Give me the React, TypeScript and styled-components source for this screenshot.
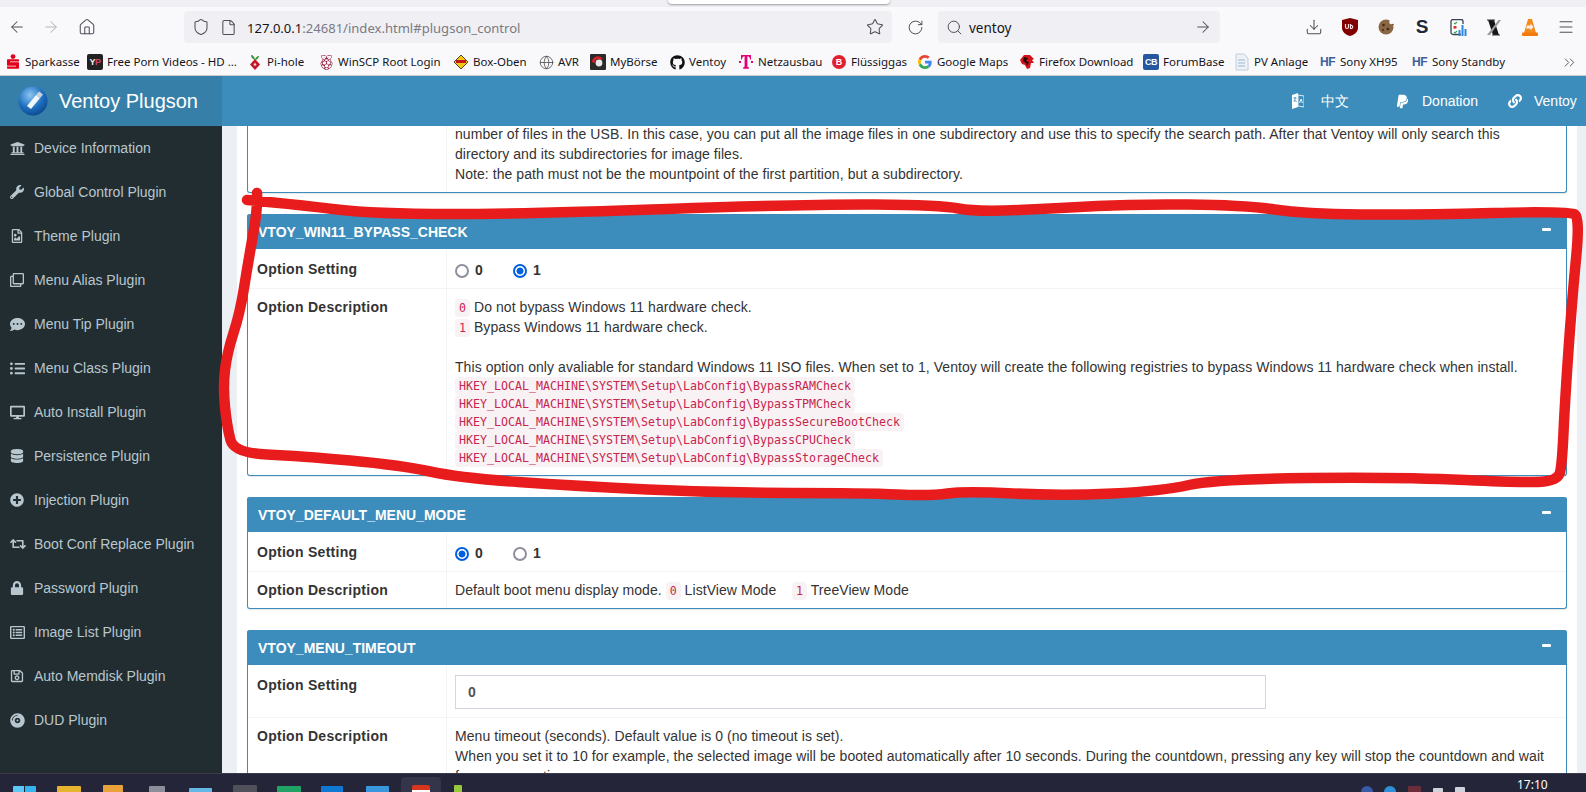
import React from 'react';
import styled, { createGlobalStyle } from 'styled-components';
import { ArrowLeft, ArrowRight, Home, Shield, File, Star, RotateCw, Search, Download, Menu, Globe, ChevronsRight } from 'lucide-react';
import {
  FaUniversity, FaWrench, FaRegFileImage, FaRegClone, FaCommentDots, FaListUl, FaDesktop, FaDatabase,
  FaPlusCircle, FaRetweet, FaLock, FaRegListAlt, FaRegSave, FaCompactDisc, FaPaypal, FaLink,
  FaGithub, FaRaspberryPi,
} from 'react-icons/fa';

const Global = createGlobalStyle`
  html, body { margin: 0; padding: 0; overflow: hidden; background: #fff; }
  * { box-sizing: border-box; }
`;

const Page = styled.div`
  position: relative;
  width: 1586px;
  height: 792px;
  display: flex;
  flex-direction: column;
  overflow: hidden;
  font-family: "Liberation Sans", Arial, sans-serif;
  font-size: 14px;
  line-height: 20px;
  color: #333;
`;

/* ---------- browser chrome ---------- */
const TopStrip = styled.div`
  position: relative;
  height: 7px;
  flex: none;
  background: #f0f0f4;
`;
const Popup = styled.div`
  position: absolute;
  left: 668px;
  top: -4px;
  width: 222px;
  height: 8px;
  background: #fff;
  border-radius: 4px;
  box-shadow: 0 1px 2px rgba(0, 0, 0, .35);
`;
const Toolbar = styled.div`
  height: 40px;
  flex: none;
  display: flex;
  align-items: center;
  background: #f9f9fb;
  color: #5b5b66;
`;
const ToolSlot = styled.div<{ $w: number; $ml?: number; $off?: boolean }>`
  width: ${p => p.$w}px;
  margin-left: ${p => p.$ml ?? 0}px;
  display: flex;
  align-items: center;
  justify-content: center;
  flex: none;
  color: ${p => (p.$off ? '#b5b5bb' : '#4f4f59')};
`;
const UrlBar = styled.div<{ $w: number; $ml?: number }>`
  width: ${p => p.$w}px;
  margin-left: ${p => p.$ml ?? 0}px;
  height: 32px;
  flex: none;
  display: flex;
  align-items: center;
  padding: 0 8px;
  background: #f0f0f4;
  border-radius: 4px;
  font-family: "Noto Sans", sans-serif;
  font-size: 13.5px;
  color: #15141a;
`;
const UrlHost = styled.span`
  margin: 1px 0 0 10px;
  font-size: 13.05px;
  white-space: nowrap;
`;
const UrlRest = styled.span`
  color: #7a7a83;
`;
const SearchText = styled.span`
  margin: 1px 0 0 6px;
`;
const PushRight = styled.div`
  margin-left: auto;
  display: flex;
  align-items: center;
`;
const UrlIcons = styled.div`
  display: flex;
  align-items: center;
  gap: 10px;
`;
const BookmarkBar = styled.div`
  height: 29px;
  flex: none;
  display: flex;
  align-items: center;
  padding: 2px 0 0 5px;
  background: #f9f9fb;
  border-bottom: 1px solid #c9cbd0;
  font-family: "Noto Sans", sans-serif;
  font-size: 11.5px;
  color: #15141a;
  white-space: nowrap;
`;
const Bookmark = styled.div<{ $w: number }>`
  width: ${p => p.$w}px;
  flex: none;
  display: flex;
  align-items: center;
  gap: 4px;
  overflow: hidden;
`;
const Fav = styled.span`
  width: 16px;
  height: 16px;
  flex: none;
  display: flex;
  align-items: center;
  justify-content: center;
`;
const BoxFav = styled.span<{ $bg: string; $fg: string }>`
  width: 16px;
  height: 16px;
  flex: none;
  display: flex;
  align-items: center;
  justify-content: center;
  background: ${p => p.$bg};
  color: ${p => p.$fg};
  border-radius: 2px;
  font-size: 9px;
  font-weight: 700;
  font-family: "Liberation Sans", sans-serif;
  letter-spacing: -.5px;
`;
const PinkLetter = styled.span`
  color: #d0456e;
`;
const HfFav = styled.span`
  width: 16px;
  flex: none;
  color: #3f5f9f;
  font-size: 12px;
  font-weight: 700;
  font-family: "Liberation Sans", sans-serif;
  letter-spacing: -.5px;
`;
const MoreSlot = styled.div`
  margin-left: auto;
  padding-right: 8px;
  display: flex;
  color: #5b5b66;
`;

/* ---------- app header ---------- */
const Header = styled.header`
  height: 50px;
  flex: none;
  display: flex;
  align-items: center;
  background: #3c8dbc;
  color: #fff;
`;
const Brand = styled.div`
  width: 222px;
  height: 100%;
  flex: none;
  display: flex;
  align-items: center;
  gap: 11px;
  padding-left: 18px;
  background: #367fa9;
  font-size: 20px;
`;
const HeaderLinks = styled.nav`
  margin-left: auto;
  display: flex;
  align-items: center;
`;
const HeaderLink = styled.a<{ $w: number; $gap: number }>`
  width: ${p => p.$w}px;
  display: flex;
  align-items: center;
  gap: ${p => p.$gap}px;
  color: #fff;
  white-space: nowrap;
`;

/* ---------- body ---------- */
const Body = styled.div`
  flex: 1;
  min-height: 0;
  display: flex;
  overflow: hidden;
`;
const Sidebar = styled.aside`
  width: 222px;
  flex: none;
  background: #222d32;
  color: #b8c7ce;
`;
const NavItem = styled.div`
  height: 44px;
  display: flex;
  align-items: center;
  padding-left: 10px;
`;
const NavIcon = styled.span`
  width: 24px;
  flex: none;
  display: flex;
  align-items: center;
`;
const Content = styled.main`
  flex: 1;
  min-width: 0;
  background: #ecf0f5;
  padding: 0 9px 0 15px;
`;
const Panel = styled.div`
  height: 100%;
  background: #fff;
  padding: 0 10px;
  display: flex;
  flex-direction: column;
  gap: 21px;
  overflow: hidden;
`;
const Box = styled.section`
  flex: none;
  border: 1px solid #3c8dbc;
  border-top: 0;
  border-radius: 3px;
  background: #fff;
  box-shadow: 0 1px 1px rgba(0, 0, 0, .1);
`;
const ClippedBox = styled(Box)`
  height: 67px;
  display: flex;
  flex-direction: column;
  justify-content: flex-end;
  overflow: hidden;
  border-radius: 0 0 3px 3px;
`;
const BoxHeader = styled.div`
  height: 35px;
  margin: 0 -1px 2px;
  display: flex;
  align-items: center;
  justify-content: space-between;
  padding: 0 16px 0 11px;
  background: #3c8dbc;
  color: #fff;
  font-weight: 700;
  border-radius: 3px 3px 0 0;
`;
const Collapse = styled.span`
  width: 9px;
  height: 3px;
  margin-top: -5px;
  background: #fff;
  border-radius: 1px;
`;
const Row = styled.div`
  display: flex;
  & + & { border-top: 1px solid #f4f4f4; }
`;
const LabelCell = styled.div`
  width: 199px;
  flex: none;
  padding: 8px 9px;
  border-right: 1px solid #f4f4f4;
  font-weight: 700;
  letter-spacing: .28px;
`;
const ValueCell = styled.div`
  flex: 1;
  min-width: 0;
  padding: 8px;
  white-space: nowrap;
  letter-spacing: .065px;
`;
const Code = styled.code`
  padding: 2px 4px;
  font-family: "DejaVu Sans Mono", monospace;
  font-size: 11.63px;
  line-height: 14px;
  letter-spacing: 0;
  color: #c7254e;
  background: #f9f2f4;
  border-radius: 4px;
`;
const CodeBlock = styled(Code)`
  display: block;
  width: fit-content;
  height: 18px;
  padding: 0 4px;
  line-height: 19px;
`;
const Radios = styled.div`
  display: flex;
  align-items: center;
  height: 21px;
`;
const RadioItem = styled.label`
  width: 58px;
  display: flex;
  align-items: center;
  font-weight: 700;
`;
const RadioMark = styled.span<{ $on?: boolean }>`
  width: 14px;
  height: 14px;
  margin-top: 3px;
  margin-right: 6px;
  border-radius: 50%;
  border: 2px solid ${p => (p.$on ? '#0060df' : '#8f8f9d')};
  background: ${p => (p.$on ? 'radial-gradient(circle, #0060df 0 3.2px, #fff 3.8px)' : '#fff')};
`;
const NumberInput = styled.div`
  width: 811px;
  height: 34px;
  display: flex;
  align-items: center;
  padding: 0 12px;
  border: 1px solid #d2d6de;
  font-weight: 700;
  color: #555;
`;

/* ---------- task bar ---------- */
const Taskbar = styled.footer`
  height: 19px;
  flex: none;
  display: flex;
  background: #25253a;
  border-top: 1px solid #3a3a4c;
  overflow: hidden;
  padding-left: 13px;
`;
const Task = styled.div<{ $w: number; $ml: number; $top: number; $c: string; $r?: number }>`
  width: ${p => p.$w}px;
  height: 16px;
  margin-left: ${p => p.$ml}px;
  margin-top: ${p => p.$top}px;
  flex: none;
  background: ${p => p.$c};
  border-radius: ${p => p.$r ?? 1}px;
`;
const ActiveTask = styled.div`
  width: 40px;
  height: 20px;
  margin: 3px 0 0 12px;
  flex: none;
  display: flex;
  justify-content: center;
  padding-top: 8px;
  background: #34344a;
  border-radius: 4px;
`;
const ActiveGlyph = styled.span`
  width: 18px;
  height: 14px;
  background: linear-gradient(#d8351f 0 5px, #fff 5px);
  border-radius: 2px;
`;
const Clock = styled.div`
  margin-left: 52px;
  margin-top: 3px;
  flex: none;
  color: #fff;
  font-family: "Noto Sans", sans-serif;
  font-size: 12px;
  line-height: 16px;
`;

/* ---------- annotation ---------- */
const Scribble = styled.svg`
  position: absolute;
  left: 0;
  top: 0;
  pointer-events: none;
`;

const scribblePoints: [number, number][] = [
  [257, 193], [258, 207], [248, 263], [240, 313], [227, 353], [223, 387], [227, 427], [234, 453],
  [300, 456], [400, 465], [460, 478], [576, 486], [720, 493], [865, 493], [930, 496], [965, 491],
  [1062, 496], [1163, 491], [1215, 479], [1400, 477], [1530, 483], [1558, 480], [1562, 465],
  [1565, 400], [1572, 300], [1580, 218], [1570, 211], [1416, 215], [1305, 214], [1244, 205], [1133, 204],
  [1062, 208], [976, 212], [941, 205], [809, 204], [526, 214], [374, 214], [300, 205], [247, 200],
];
const smoothPath = (pts: [number, number][]) => {
  let d = `M${pts[0][0]} ${pts[0][1]}`;
  for (let i = 1; i < pts.length - 1; i++) {
    const mx = (pts[i][0] + pts[i + 1][0]) / 2;
    const my = (pts[i][1] + pts[i + 1][1]) / 2;
    d += ` Q${pts[i][0]} ${pts[i][1]} ${mx} ${my}`;
  }
  const last = pts[pts.length - 1];
  return `${d} L${last[0]} ${last[1]}`;
};

/* ---------- small logos ---------- */
const Sparkasse = () => (
  <svg width="16" height="16" viewBox="0 0 16 16">
    <circle cx="8" cy="2.600" r="2.400" fill="#e2001a" />
    <path d="M2 6.200c0-.6.400-1 1-1h10c.6 0 1 .4 1 1v1.300H5v.7h8c.6 0 1 .4 1 1v4.600c0 .6-.4 1-1 1H3c-.6 0-1-.4-1-1v-1.300h9v-.7H3c-.6 0-1-.4-1-1z" fill="#e2001a" />
  </svg>
);
const PiHole = () => (
  <svg width="14" height="16" viewBox="0 0 14 16">
    <path d="M7 6C4 5 3 3 3 1c2 0 4 2 4 5zM7 6c0-2 2-4 4-4 0 2-2 4-4 4z" fill="#3d9a37" />
    <path d="M7 5l5 5.500-5 5.500-5-5.500z" fill="#c4162a" />
    <circle cx="7" cy="10.500" r="1.300" fill="#f3d7d7" />
  </svg>
);
const BoxOben = () => (
  <svg width="16" height="16" viewBox="0 0 16 16">
    <path d="M8 1l7 7-7 7-7-7z" fill="#f3c614" stroke="#222" strokeWidth=".8" />
    <rect x="3" y="6" width="10" height="3" fill="#c4161c" />
  </svg>
);
const MyBoerse = () => (
  <svg width="16" height="16" viewBox="0 0 16 16">
    <rect width="16" height="16" rx="1" fill="#2a2a2a" />
    <path d="M2 8a6 6 0 0 1 11-3l-3 1a3 3 0 0 0-5 3z" fill="#d2232a" />
    <circle cx="9" cy="9" r="3.400" fill="#e8e8e8" />
  </svg>
);
const Telekom = () => (
  <svg width="14" height="16" viewBox="0 0 14 16">
    <path d="M2 1h10v4.500h-1c0-2-.8-3.200-2.600-3.300V12c0 1 .4 1.400 1.500 1.400v1.400H4.100v-1.400c1.100 0 1.500-.4 1.500-1.400V2.200C3.800 2.300 3 3.500 3 5.500H2z" fill="#e20074" />
    <rect x="0" y="7" width="2" height="2" fill="#e20074" />
    <rect x="12" y="7" width="2" height="2" fill="#e20074" />
  </svg>
);
const BallB = styled.span`
  width: 14px;
  height: 14px;
  border-radius: 50%;
  background: #e0202c;
  color: #fff;
  font-size: 9px;
  font-weight: 700;
  line-height: 14px;
  text-align: center;
  font-family: "Liberation Sans", sans-serif;
`;
const GoogleG = () => (
  <svg width="14" height="14" viewBox="0 0 48 48">
    <path fill="#EA4335" d="M24 9.500c3.500 0 6.700 1.300 9.100 3.500l6.800-6.800C35.800 2.400 30.200 0 24 0 14.600 0 6.500 5.400 2.600 13.200l7.900 6.200C12.400 13.700 17.700 9.500 24 9.500z" />
    <path fill="#4285F4" d="M46.900 24.500c0-1.600-.2-3.100-.4-4.500H24v9h12.900c-.6 3-2.300 5.500-4.800 7.200l7.700 6c4.500-4.200 7.100-10.300 7.100-17.700z" />
    <path fill="#FBBC05" d="M10.500 28.600c-.5-1.400-.8-3-.8-4.600s.3-3.200.8-4.600l-7.900-6.200C.9 16.500 0 20.100 0 24s.9 7.500 2.600 10.800z" />
    <path fill="#34A853" d="M24 48c6.500 0 11.900-2.100 15.900-5.800l-7.700-6c-2.200 1.500-4.900 2.300-8.200 2.300-6.300 0-11.600-4.200-13.500-9.900l-7.900 6.200C6.500 42.600 14.600 48 24 48z" />
  </svg>
);
const RedDragon = () => (
  <svg width="16" height="16" viewBox="0 0 16 16">
    <path d="M1 6l4-5 6 0 4 4-2 1 2 3-3 0-1 5-3 1-2-4-3-1z" fill="#d3131a" />
    <path d="M5 3l4 1-2 3 3 1-2 4-1-3-3-2z" fill="#2a0a0a" />
  </svg>
);
const PvDoc = () => (
  <svg width="16" height="18" viewBox="0 0 16 18">
    <path d="M2 1h8l4 4v12H2z" fill="#eef2f6" stroke="#c3ccd6" />
    <path d="M4 7h7M4 10h7M4 13h7" stroke="#9db8d4" />
  </svg>
);
const Language = () => (
  <svg width="12" height="16" viewBox="0 0 12 16">
    <path d="M0 2l6-2v14l-6 2z" fill="#fff" />
    <path d="M6 2l6 1v11l-6-1z" fill="#3c8dbc" stroke="#dcebf5" />
    <path d="M1.500 5h3M3 4v1c0 2-1 3.500-1.500 4M3 7l1.500 2" stroke="#3c8dbc" strokeWidth=".9" fill="none" />
    <path d="M7.500 10l1.500-4 1.500 4" stroke="#fff" strokeWidth=".9" fill="none" />
  </svg>
);
const UBlock = () => (
  <svg width="16" height="18" viewBox="0 0 16 18">
    <path d="M8 0l8 2v8c0 4-4 7-8 8-4-1-8-4-8-8V2z" fill="#800000" />
    <path d="M3.500 6v3c0 2 3 2 3 0V6M8.500 6v5M8.500 7.500c3-1 3 3.500 0 3" fill="none" stroke="#f0dcdc" strokeWidth="1.200" />
  </svg>
);
const Cookie = () => (
  <svg width="16" height="18" viewBox="0 0 16 18">
    <circle cx="8" cy="9" r="7.500" fill="#8a6642" />
    <circle cx="5.500" cy="7" r="1.300" fill="#3f2a18" />
    <circle cx="10" cy="11" r="1.300" fill="#3f2a18" />
    <circle cx="5" cy="12" r="1" fill="#3f2a18" />
    <circle cx="13.500" cy="4" r="2.300" fill="#f9f9fb" />
    <circle cx="15" cy="6.500" r=".8" fill="#6b4c2e" />
  </svg>
);
const SMark = styled.span`
  width: 16px;
  height: 16px;
  display: flex;
  align-items: center;
  justify-content: center;
  border-radius: 50%;
  background: #fff;
  font-family: "Liberation Sans", sans-serif;
  font-size: 19px;
  font-weight: 700;
  color: #23273a;
`;
const ChartExt = () => (
  <svg width="17" height="17" viewBox="0 0 17 17">
    <path d="M11 15.500H3a2 2 0 0 1-2-2v-11a2 2 0 0 1 2-2h8a2 2 0 0 1 2 2V5" fill="#fff" stroke="#39424d" strokeWidth="1.300" />
    <path d="M4 4l1 1 2-2" fill="none" stroke="#3aa655" strokeWidth="1.100" />
    <rect x="3.500" y="7" width="3" height="2.600" fill="#d8342c" />
    <path d="M4 13l1 1 2-2" fill="none" stroke="#3aa655" strokeWidth="1.100" />
    <path d="M9.500 17v-6M12.500 17V6M15.500 17v-7" stroke="#2c86e0" strokeWidth="2" />
  </svg>
);
const XExt = () => (
  <svg width="16" height="17" viewBox="0 0 16 17">
    <path d="M2 1h6l5 15H7z" fill="#161616" />
    <path d="M15 1h-2.500L1 16h3z" fill="#9a9a9a" />
    <path d="M1 1h8M6 16h8" stroke="#333" />
  </svg>
);
const Vlc = () => (
  <svg width="16" height="17" viewBox="0 0 16 17">
    <path d="M6 0h4l4 14H2z" fill="#f28a1c" />
    <path d="M5 6.500h3.500v-2l3 3.500-3 3.500v-2H4z" fill="#f6efe6" />
    <rect x="0" y="13.500" width="16" height="3.500" rx="1" fill="#f27a0c" />
  </svg>
);
const LogoBall = () => (
  <svg width="30" height="30" viewBox="0 0 30 30">
    <defs>
      <radialGradient id="ball" cx=".4" cy=".3" r=".8">
        <stop offset="0" stopColor="#8cc6f2" />
        <stop offset=".55" stopColor="#1d6fc0" />
        <stop offset="1" stopColor="#0b3f82" />
      </radialGradient>
    </defs>
    <circle cx="15" cy="15" r="14.500" fill="url(#ball)" />
    <path d="M9 20l9-11 4 3-9 11z" fill="#f2f6fa" />
    <path d="M18 9l3-3.500 4 3-3 3.500z" fill="#c8d3de" />
  </svg>
);

/* ---------- data ---------- */
const navItems: [React.ComponentType<{ size?: number }>, string, number][] = [
  [FaUniversity, 'Device Information', 15],
  [FaWrench, 'Global Control Plugin', 14],
  [FaRegFileImage, 'Theme Plugin', 14],
  [FaRegClone, 'Menu Alias Plugin', 14],
  [FaCommentDots, 'Menu Tip Plugin', 15],
  [FaListUl, 'Menu Class Plugin', 15],
  [FaDesktop, 'Auto Install Plugin', 15],
  [FaDatabase, 'Persistence Plugin', 14],
  [FaPlusCircle, 'Injection Plugin', 14],
  [FaRetweet, 'Boot Conf Replace Plugin', 16],
  [FaLock, 'Password Plugin', 14],
  [FaRegListAlt, 'Image List Plugin', 15],
  [FaRegSave, 'Auto Memdisk Plugin', 14],
  [FaCompactDisc, 'DUD Plugin', 15],
];

const regs = ['BypassRAMCheck', 'BypassTPMCheck', 'BypassSecureBootCheck', 'BypassCPUCheck', 'BypassStorageCheck'];

const OptionRadios = ({ on }: { on: 0 | 1 }) => (
  <Radios>
    <RadioItem><RadioMark $on={on === 0} />0</RadioItem>
    <RadioItem><RadioMark $on={on === 1} />1</RadioItem>
  </Radios>
);

export default function App() {
  return (
    <Page>
      <Global />
      <TopStrip><Popup /></TopStrip>
      <Toolbar>
        <ToolSlot $w={33}><ArrowLeft size={18} strokeWidth={1.4} /></ToolSlot>
        <ToolSlot $w={36} $off><ArrowRight size={18} strokeWidth={1.4} /></ToolSlot>
        <ToolSlot $w={36}><Home size={18} strokeWidth={1.4} /></ToolSlot>
        <UrlBar $w={708} $ml={79}>
          <UrlIcons>
            <Shield size={18} strokeWidth={1.4} color="#4f4f59" />
            <File size={17} strokeWidth={1.5} color="#4f4f59" />
          </UrlIcons>
          <UrlHost>127.0.0.1<UrlRest>:24681/index.html#plugson_control</UrlRest></UrlHost>
          <PushRight><Star size={18} strokeWidth={1.4} color="#4f4f59" /></PushRight>
        </UrlBar>
        <ToolSlot $w={46}><RotateCw size={17} strokeWidth={1.4} /></ToolSlot>
        <UrlBar $w={282}>
          <Search size={17} strokeWidth={1.4} color="#4f4f59" />
          <SearchText>ventoy</SearchText>
          <PushRight><ArrowRight size={18} strokeWidth={1.4} color="#4f4f59" /></PushRight>
        </UrlBar>
        <ToolSlot $w={36} $ml={76}><Download size={18} strokeWidth={1.4} /></ToolSlot>
        <ToolSlot $w={36}><UBlock /></ToolSlot>
        <ToolSlot $w={36}><Cookie /></ToolSlot>
        <ToolSlot $w={36}><SMark>S</SMark></ToolSlot>
        <ToolSlot $w={36}><ChartExt /></ToolSlot>
        <ToolSlot $w={36}><XExt /></ToolSlot>
        <ToolSlot $w={36}><Vlc /></ToolSlot>
        <ToolSlot $w={36}><Menu size={18} strokeWidth={1.4} /></ToolSlot>
      </Toolbar>
      <BookmarkBar>
        <Bookmark $w={82}><Fav><Sparkasse /></Fav>Sparkasse</Bookmark>
        <Bookmark $w={160}><BoxFav $bg="#222" $fg="#f2f2f2">Y<PinkLetter>P</PinkLetter></BoxFav>Free Porn Videos - HD ...</Bookmark>
        <Bookmark $w={71}><Fav><PiHole /></Fav>Pi-hole</Bookmark>
        <Bookmark $w={135}><Fav><FaRaspberryPi size={15} color="#8f1738" /></Fav>WinSCP Root Login</Bookmark>
        <Bookmark $w={85}><Fav><BoxOben /></Fav>Box-Oben</Bookmark>
        <Bookmark $w={52}><Fav><Globe size={15} strokeWidth={1.2} color="#444" /></Fav>AVR</Bookmark>
        <Bookmark $w={79}><Fav><MyBoerse /></Fav>MyBörse</Bookmark>
        <Bookmark $w={69}><Fav><FaGithub size={15} color="#111" /></Fav>Ventoy</Bookmark>
        <Bookmark $w={93}><Fav><Telekom /></Fav>Netzausbau</Bookmark>
        <Bookmark $w={86}><Fav><BallB>B</BallB></Fav>Flüssiggas</Bookmark>
        <Bookmark $w={102}><Fav><GoogleG /></Fav>Google Maps</Bookmark>
        <Bookmark $w={124}><Fav><RedDragon /></Fav>Firefox Download</Bookmark>
        <Bookmark $w={91}><BoxFav $bg="#25599f" $fg="#fff">CB</BoxFav>ForumBase</Bookmark>
        <Bookmark $w={86}><Fav><PvDoc /></Fav>PV Anlage</Bookmark>
        <Bookmark $w={92}><HfFav>HF</HfFav>Sony XH95</Bookmark>
        <Bookmark $w={120}><HfFav>HF</HfFav>Sony Standby</Bookmark>
        <MoreSlot><ChevronsRight size={17} strokeWidth={1.4} /></MoreSlot>
      </BookmarkBar>

      <Header>
        <Brand><LogoBall />Ventoy Plugson</Brand>
        <HeaderLinks>
          <HeaderLink $w={103} $gap={17}><Language />中文</HeaderLink>
          <HeaderLink $w={113} $gap={12}><FaPaypal size={15} />Donation</HeaderLink>
          <HeaderLink $w={78} $gap={12}><FaLink size={14} />Ventoy</HeaderLink>
        </HeaderLinks>
      </Header>

      <Body>
        <Sidebar>
          {navItems.map(([Icon, label, size]) => (
            <NavItem key={label}><NavIcon><Icon size={size} /></NavIcon>{label}</NavItem>
          ))}
        </Sidebar>
        <Content>
          <Panel>
            <ClippedBox>
              <Row>
                <LabelCell />
                <ValueCell>
                  number of files in the USB. In this case, you can put all the image files in one subdirectory and use this to specify the search path. After that Ventoy will only search this<br />
                  directory and its subdirectories for image files.<br />
                  Note: the path must not be the mountpoint of the first partition, but a subdirectory.
                </ValueCell>
              </Row>
            </ClippedBox>

            <Box>
              <BoxHeader>VTOY_WIN11_BYPASS_CHECK<Collapse /></BoxHeader>
              <Row><LabelCell>Option Setting</LabelCell><ValueCell><OptionRadios on={1} /></ValueCell></Row>
              <Row>
                <LabelCell>Option Description</LabelCell>
                <ValueCell>
                  <Code>0</Code> Do not bypass Windows 11 hardware check.<br />
                  <Code>1</Code> Bypass Windows 11 hardware check.<br />
                  <br />
                  This option only avaliable for standard Windows 11 ISO files. When set to 1, Ventoy will create the following registries to bypass Windows 11 hardware check when install.
                  {regs.map(r => (
                    <CodeBlock key={r}>{`HKEY_LOCAL_MACHINE\\SYSTEM\\Setup\\LabConfig\\${r}`}</CodeBlock>
                  ))}
                </ValueCell>
              </Row>
            </Box>

            <Box>
              <BoxHeader>VTOY_DEFAULT_MENU_MODE<Collapse /></BoxHeader>
              <Row><LabelCell>Option Setting</LabelCell><ValueCell><OptionRadios on={0} /></ValueCell></Row>
              <Row>
                <LabelCell>Option Description</LabelCell>
                <ValueCell>
                  Default boot menu display mode. <Code>0</Code> ListView Mode &nbsp;&nbsp;&nbsp;<Code>1</Code> TreeView Mode
                </ValueCell>
              </Row>
            </Box>

            <Box>
              <BoxHeader>VTOY_MENU_TIMEOUT<Collapse /></BoxHeader>
              <Row><LabelCell>Option Setting</LabelCell><ValueCell><NumberInput>0</NumberInput></ValueCell></Row>
              <Row>
                <LabelCell>Option Description</LabelCell>
                <ValueCell>
                  Menu timeout (seconds). Default value is 0 (no timeout is set).<br />
                  When you set it to 10 for example, the selected image will be booted automatically after 10 seconds. During the countdown, pressing any key will stop the countdown and wait<br />
                  for your operation.
                </ValueCell>
              </Row>
            </Box>
          </Panel>
        </Content>
      </Body>

      <Taskbar>
        <Task $w={23} $ml={0} $top={12} $c="linear-gradient(90deg, #5cc8f5 0 11px, #25253a 11px 12px, #35b4ef 12px)" />
        <Task $w={24} $ml={21} $top={12} $c="#e8b32e" />
        <Task $w={20} $ml={22} $top={11} $c="#e9a13a" />
        <Task $w={16} $ml={26} $top={12} $c="#8a8f99" />
        <Task $w={23} $ml={24} $top={14} $c="#63b8e6" />
        <Task $w={24} $ml={21} $top={11} $c="#50505a" />
        <Task $w={24} $ml={20} $top={12} $c="#21a366" />
        <Task $w={22} $ml={20} $top={12} $c="#0f78d4" />
        <Task $w={23} $ml={23} $top={12} $c="#3a96dd" />
        <ActiveTask><ActiveGlyph /></ActiveTask>
        <Task $w={8} $ml={13} $top={11} $c="#96c93d" />
        <Task $w={12} $ml={899} $top={12} $c="#3b5aa8" $r={6} />
        <Task $w={12} $ml={11} $top={12} $c="#2f8fd8" $r={6} />
        <Task $w={13} $ml={12} $top={12} $c="#6b2c3a" />
        <Task $w={10} $ml={12} $top={14} $c="#cfd2da" />
        <Task $w={10} $ml={12} $top={13} $c="#cfd2da" />
        <Clock>17:10</Clock>
      </Taskbar>

      <Scribble width="1586" height="792" viewBox="0 0 1586 792" fill="none">
        <path d={smoothPath(scribblePoints)} stroke="#e81c1c" strokeWidth="10.5" strokeLinecap="round" strokeLinejoin="round" />
      </Scribble>
    </Page>
  );
}
